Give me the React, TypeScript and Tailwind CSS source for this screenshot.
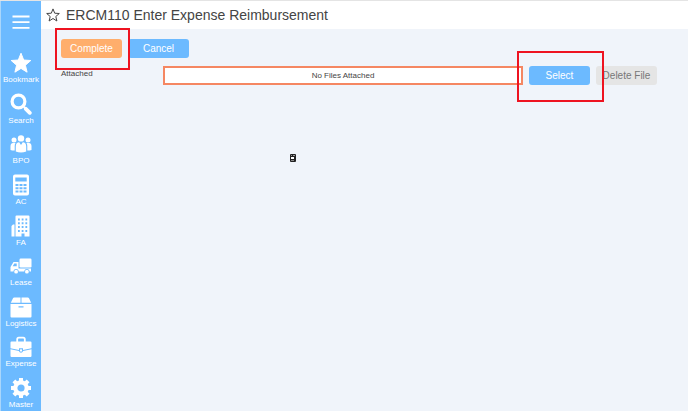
import { useState, type ReactNode } from 'react';
import clsx from 'clsx';

const NAV: { label: string; icon: ReactNode }[] = [
  {
    label: 'Bookmark',
    icon: (
      <path
        d="M11 1.200 13.700 8 20.800 8.500 15.400 13.200 17.100 20.200 11 16.400 4.900 20.200 6.600 13.200 1.200 8.500 8.300 8Z"
        stroke="currentColor"
        strokeLinejoin="round"
      />
    ),
  },
  {
    label: 'Search',
    icon: (
      <g fill="none" stroke="currentColor">
        <circle cx="8.500" cy="8.500" r="6.400" strokeWidth="3.200" />
        <path d="m13.800 13.800 1.600 1.600" strokeWidth="2" />
        <path d="m15.800 15.800 4 4" strokeWidth="3.800" strokeLinecap="round" />
      </g>
    ),
  },
  {
    label: 'BPO',
    icon: (
      <>
        <circle cx="11" cy="5.400" r="3.200" />
        <circle cx="4" cy="7" r="2.500" />
        <circle cx="18" cy="7" r="2.500" />
        <path d="M5.800 18.500v-5.300c0-2.500 1.400-4 3.400-4L11 12l1.800-2.800c2 0 3.400 1.500 3.400 4v5.300c-3 1.200-7.400 1.200-10.400 0Z" />
        <path d="M.5 17v-4c0-2 1.100-3 2.500-3h2.500c-.6.900-.8 1.900-.8 3.200V17.600C3 17.600 1.500 17.400.5 17ZM21.500 17v-4c0-2-1.100-3-2.500-3h-2.500c.6.900.8 1.900.8 3.200v4.400c1.700 0 3.200-.2 4.200-.6Z" />
      </>
    ),
  },
  {
    label: 'AC',
    icon: (
      <path
        fillRule="evenodd"
        d="M5 .5h12a2 2 0 0 1 2 2v17a2 2 0 0 1-2 2H5a2 2 0 0 1-2-2v-17a2 2 0 0 1 2-2ZM5.300 3.500v4h11.400v-4ZM5.500 10v2h3v-2ZM9.500 10v2h3v-2ZM13.500 10v2h3v-2ZM5.500 13.300v2h3v-2ZM9.500 13.300v2h3v-2ZM13.500 13.300v2h3v-2ZM5.500 16.600v2h3v-2ZM9.500 16.600v2h3v-2ZM13.500 16.600v2h3v-2Z"
      />
    ),
  },
  {
    label: 'FA',
    icon: (
      <>
        <path d="M1.500 21.500V11l1.500-1.500h1.500v12Z" />
        <path
          fillRule="evenodd"
          d="M6.500.5h12a1 1 0 0 1 1 1v20h-5v-3h-3v3h-6v-20a1 1 0 0 1 1-1ZM8 3.500v2h1.800v-2ZM11.700 3.500v2h1.800v-2ZM15.400 3.500v2h1.800v-2ZM8 7.300v2h1.800v-2ZM11.700 7.300v2h1.800v-2ZM15.400 7.300v2h1.800v-2ZM8 11.100v2h1.800v-2ZM11.700 11.100v2h1.800v-2ZM15.400 11.100v2h1.800v-2ZM8 14.900v2h1.800v-2ZM11.700 14.900v2h1.800v-2ZM15.400 14.900v2h1.800v-2Z"
        />
      </>
    ),
  },
  {
    label: 'Lease',
    icon: (
      <>
        <rect x="9.500" y="3.500" width="12" height="9" rx="1.200" />
        <path
          fillRule="evenodd"
          d="M3.500 7h5v6.500h12.500v3h-1.500a2.600 2.600 0 0 0-5.200 0h-5.600a2.600 2.600 0 0 0-5.200 0H.5v-4.500ZM4.300 8.400 2.700 11.200h4V8.400Z"
        />
        <circle cx="6.100" cy="16.700" r="1.900" />
        <circle cx="16.900" cy="16.700" r="1.900" />
      </>
    ),
  },
  {
    label: 'Logistics',
    icon: (
      <>
        <path d="M4.200 1.500h6.300v5.300H.8L3 2.200c.2-.5.7-.7 1.200-.7ZM11.500 1.500h6.300c.5 0 1 .2 1.200.7l2.200 4.600h-9.700Z" />
        <path fillRule="evenodd" d="M.5 8h21v12.500a1 1 0 0 1-1 1h-19a1 1 0 0 1-1-1ZM8.500 10.200v1.300h5v-1.300Z" />
      </>
    ),
  },
  {
    label: 'Expense',
    icon: (
      <>
        <path d="M7.200 6V3.300c0-1 .7-1.600 1.600-1.600h4.400c.9 0 1.600.6 1.600 1.600V6" fill="none" stroke="currentColor" strokeWidth="1.800" />
        <path d="M1.500 5.500h19a1 1 0 0 1 1 1v5.800L13 14v-1.700H9V14L.5 12.300V6.500a1 1 0 0 1 1-1Z" />
        <path d="M.5 13.300 9 15.100c.3 1 1 1.600 2 1.600s1.700-.6 2-1.600l8.500-1.800v6.700a1 1 0 0 1-1 1h-19a1 1 0 0 1-1-1Z" />
        <rect x="10" y="13.200" width="2" height="2.300" rx=".5" />
      </>
    ),
  },
  {
    label: 'Master',
    icon: (
      <>
        <circle cx="11" cy="11" r="5.700" fill="none" stroke="currentColor" strokeWidth="4.200" />
        <path
          d="M11 4V1M11 18v3M4 11H1M18 11h3M6 6 3.900 3.900M16 16l2.100 2.100M6 16l-2.100 2.100M16 6l2.100-2.100"
          stroke="currentColor"
          strokeWidth="4"
        />
      </>
    ),
  },
];

const BUTTON = 'h-[19px] w-[61px] shrink-0 rounded-[3px] text-center text-[10px] leading-[19px] whitespace-nowrap';

export default function App() {
  const [favorite, setFavorite] = useState(false);

  return (
    <div className="flex h-screen min-h-[360px] border-t border-[#e4e4e4] bg-[#f0f4fa] font-['Liberation_Sans',Arial,sans-serif] text-[#444]">
      <aside className="flex w-[41px] shrink-0 flex-col border-l border-[#a9d6fb] bg-[#6cbaff] text-white">
        <button type="button" aria-label="Menu" className="flex h-[51px] shrink-0 items-start justify-center pt-[14px]">
          <svg viewBox="0 0 18 14" className="h-[14px] w-[18px]" stroke="currentColor" strokeWidth="1.800">
            <path d="M.5 1.500h17M.5 7.200h17M.5 12.800h17" />
          </svg>
        </button>
        <nav className="flex flex-1 flex-col justify-between">
          {NAV.map((item) => (
            <a key={item.label} href="#" className="flex flex-col items-center">
              <svg viewBox="0 0 22 22" className="size-[22px]" fill="currentColor" aria-hidden>
                {item.icon}
              </svg>
              <span className="text-[8px] leading-[12px]">{item.label}</span>
            </a>
          ))}
        </nav>
      </aside>

      <div className="flex min-w-0 flex-1 flex-col">
        <header className="flex h-7 shrink-0 items-center gap-[6px] bg-white pl-[5px]">
          <button type="button" aria-label="Favorite" aria-pressed={favorite} onClick={() => setFavorite((v) => !v)}>
            <svg viewBox="0 0 14 14" className="size-[14px]" fill={favorite ? 'currentColor' : 'none'} stroke="currentColor">
              <path d="m7 .9 1.700 4.300 4.600.3-3.500 3 1.100 4.500L7 10.500 3.100 13l1.100-4.500-3.500-3 4.600-.3Z" />
            </svg>
          </button>
          <h1 className="text-[14px] leading-5 whitespace-nowrap">ERCM110 Enter Expense Reimbursement</h1>
        </header>

        <main className="relative flex-1 pt-[10px] pr-[31px] pl-5">
          <div className="flex gap-[6px]">
            <button type="button" className={clsx(BUTTON, 'bg-[#ffae6c] text-white')}>Complete</button>
            <button type="button" className={clsx(BUTTON, 'bg-[#6cbaff] text-white')}>Cancel</button>
          </div>
          <div className="mt-2 flex gap-[6px]">
            <label htmlFor="attached" className="w-24 shrink-0 text-[8px] leading-4">Attached</label>
            <input
              id="attached"
              readOnly
              value="No Files Attached"
              className="h-[19px] min-w-0 flex-1 border-2 border-[#f58762] bg-white text-center text-[8px] outline-none"
            />
            <button type="button" className={clsx(BUTTON, 'bg-[#6cbaff] text-white')}>Select</button>
            <button type="button" disabled className={clsx(BUTTON, 'bg-[#e5e5e5] text-[#777]')}>Delete File</button>
          </div>

          {/* highlight frames over the two buttons to press */}
          <div className="pointer-events-none absolute -top-px left-[14px] h-[42px] w-[75px] border-2 border-[#ee1320]" />
          <div className="pointer-events-none absolute top-[22px] right-[84px] h-[51px] w-[87px] border-2 border-[#ee1320]" />

          {/* small broken-glyph marker in the empty area */}
          <svg viewBox="0 0 6 8" className="absolute top-[125px] left-[249px] h-2 w-[6px]" aria-hidden>
            <rect width="6" height="8" rx="1" fill="#222" />
            <path d="M1 1h1v1H1ZM3 1h2v1H3Z" fill="#999" />
            <path d="M1 3h3v2H1Z" fill="#fff" />
            <path d="M1 6h3v1H1Z" fill="#888" />
          </svg>
        </main>
      </div>
    </div>
  );
}
